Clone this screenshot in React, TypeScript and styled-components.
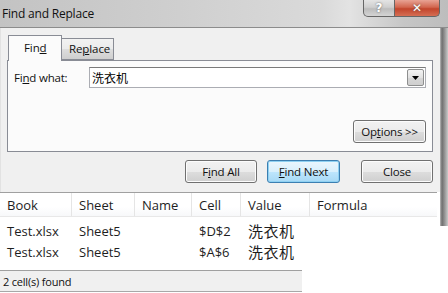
import React from "react";
import styled, { createGlobalStyle } from "styled-components";

const Global = createGlobalStyle`
  html, body { margin: 0; padding: 0; background: #ffffff; }
  body { font-family: "Open Sans", "Noto Sans", "Noto Sans CJK SC", sans-serif; }
`;

const UI = `"Open Sans", "Noto Sans", "Noto Sans CJK SC", sans-serif`;
const CJK = `"Noto Sans CJK SC", sans-serif`;

const Window = styled.div`
  position: relative;
  width: 448px;
  height: 293px;
  overflow: hidden;
  background: #ffffff;
  display: flex;
  flex-direction: column;
  &::after {
    content: "";
    position: absolute;
    top: 28px;
    right: 0;
    width: 8px;
    height: 198px;
    background: linear-gradient(90deg, #b8b8b8 0px, #6f6f6f 2px, #8a8a8a 4px, #c9c9c9 8px);
  }
`;

const TitleBar = styled.div`
  height: 28px;
  flex: none;
  display: flex;
  align-items: flex-start;
  justify-content: space-between;
  background: linear-gradient(90deg, #c3c3c3 0%, #cfcfcf 40%, #dadada 72%, #e3e3e3 78%, #c6c6c6 90%, #bdbdbd 100%);
  border-bottom: 1px solid #8c8c8c;
  box-sizing: border-box;
`;

const Title = styled.span`
  font-family: ${UI};
  font-size: 12px;
  letter-spacing: -0.2px;
  color: #111;
  padding: 5px 0 0 2px;
`;

const Caption = styled.div`
  display: flex;
  margin-right: 8px;
`;

const CapButton = styled.div<{ $close?: boolean }>`
  width: ${(p) => (p.$close ? 45 : 32)}px;
  height: 17px;
  box-sizing: border-box;
  display: flex;
  align-items: center;
  justify-content: center;
  font-family: "DejaVu Sans", sans-serif;
  font-weight: bold;
  font-size: 12px;
  color: #fff;
  text-shadow: 0 0 2px #555;
  border: 1px solid #666;
  border-top: none;
  border-radius: ${(p) => (p.$close ? "0 0 5px 0" : "0 0 0 5px")};
  ${(p) => (p.$close ? "border-left: none;" : "")}
  background: ${(p) =>
    p.$close
      ? "linear-gradient(180deg, #e8a394 0%, #d2664f 45%, #c2452c 55%, #d56e54 100%)"
      : "linear-gradient(180deg, #e4e4e4 0%, #cfcfcf 45%, #bcbcbc 55%, #d4d4d4 100%)"};
`;

const Client = styled.div`
  background: #f0f0f0;
  padding: 7px 15px 0 6px;
  height: 164px;
  box-sizing: border-box;
  flex: none;
  border-left: 1px solid #e2e2e2;
`;

const TabStrip = styled.div`
  display: flex;
  align-items: flex-end;
  height: 25px;
  padding-left: 1px;
`;

const Tab = styled.div<{ $active?: boolean }>`
  font-family: ${UI};
  font-size: 11.5px;
  letter-spacing: -0.1px;
  color: #111;
  box-sizing: border-box;
  border: 1px solid #898c95;
  border-bottom: ${(p) => (p.$active ? "none" : "1px solid #898c95")};
  ${(p) => (p.$active ? "" : "border-left: none;")}
  height: ${(p) => (p.$active ? 26 : 22)}px;
  width: ${(p) => (p.$active ? 54 : 52)}px;
  margin-bottom: ${(p) => (p.$active ? -1 : 0)}px;
  padding: ${(p) => (p.$active ? "4px 0 0 15px" : "2px 0 0 7px")};
  background: ${(p) =>
    p.$active ? "#fbfbfb" : "linear-gradient(180deg, #f2f2f2 0%, #ebebeb 50%, #dddddd 51%, #cfcfcf 100%)"};
  position: relative;
  z-index: ${(p) => (p.$active ? 1 : 0)};
  u { text-decoration: underline; }
`;

const Panel = styled.div`
  width: 426px;
  height: 92px;
  box-sizing: border-box;
  border: 1px solid #898c95;
  background: #fbfbfb;
  padding: 6px 6px 0 6px;
  display: flex;
  flex-direction: column;
`;

const FieldRow = styled.div`
  display: flex;
  align-items: center;
  height: 21px;
`;

const Label = styled.span`
  font-family: ${UI};
  font-size: 11.5px;
  letter-spacing: -0.2px;
  color: #111;
  width: 75px;
`;

const Combo = styled.div`
  flex: 1;
  height: 21px;
  box-sizing: border-box;
  border: 1px solid #abadb3;
  border-top-color: #7a7a7a;
  background: #fff;
  display: flex;
  align-items: center;
  justify-content: space-between;
  padding: 0 1px 0 2px;
`;

const ComboText = styled.span`
  font-family: ${CJK};
  font-size: 12px;
  color: #000;
`;

const DropButton = styled.div`
  width: 17px;
  height: 17px;
  box-sizing: border-box;
  border: 1px solid #8e8f8f;
  border-radius: 2px;
  background: linear-gradient(180deg, #f3f3f3 0%, #e2e2e2 50%, #d6d6d6 51%, #cfcfcf 100%);
  display: flex;
  align-items: center;
  justify-content: center;
`;

const PanelFooter = styled.div`
  display: flex;
  justify-content: flex-end;
  margin-top: 32px;
`;

const Button = styled.div<{ $def?: boolean; $w?: number }>`
  width: ${(p) => p.$w ?? 73}px;
  height: 23px;
  box-sizing: border-box;
  border: 1px solid ${(p) => (p.$def ? "#3c7fb1" : "#707070")};
  border-radius: 3px;
  background: ${(p) =>
    p.$def
      ? "linear-gradient(180deg, #eaf6fd 0%, #d9f0fc 50%, #bee6fd 51%, #a7d9f5 100%)"
      : "linear-gradient(180deg, #f2f2f2 0%, #ebebeb 50%, #dddddd 51%, #cfcfcf 100%)"};
  box-shadow: inset 0 0 0 1px ${(p) => (p.$def ? "#8fd1f2" : "#fcfcfc")};
  display: flex;
  align-items: center;
  justify-content: center;
  font-family: ${UI};
  font-size: 11.5px;
  letter-spacing: -0.2px;
  color: #111;
  u { text-decoration: underline; }
`;

const ButtonRow = styled.div`
  display: flex;
  gap: 10px;
  justify-content: flex-end;
  margin-top: 8px;
  & > :last-child { margin-left: 11px; }
`;

const Table = styled.div`
  display: grid;
  grid-template-columns: 72px 63px 57px 49px 69px 127px;
  grid-template-rows: 27px 21px 21px;
  width: 437px;
  border-top: 1px solid #a0a0a0;
  background: #fff;
  padding-bottom: 8px;
`;

const HeadCell = styled.div<{ $last?: boolean }>`
  height: 24px;
  align-self: start;
  box-sizing: border-box;
  border-right: ${(p) => (p.$last ? "none" : "1px solid #e5e5e5")};
  border-bottom: 1px solid #e8e8e8;
  background: linear-gradient(180deg, #ffffff 0%, #ffffff 60%, #f7f8fa 100%);
  font-family: ${UI};
  font-size: 13px;
  color: #1e1e1e;
  padding-left: 7px;
  display: flex;
  align-items: center;
`;

const Cell = styled.div<{ $cjk?: boolean }>`
  font-family: ${(p) => (p.$cjk ? CJK : UI)};
  font-size: ${(p) => (p.$cjk ? 15 : 13)}px;
  letter-spacing: ${(p) => (p.$cjk ? "0.5px" : "0")};
  color: #1e1e1e;
  padding-left: 7px;
  display: flex;
  align-items: center;
  white-space: nowrap;
`;

const StatusBar = styled.div`
  width: 302px;
  height: 22px;
  box-sizing: border-box;
  border-top: 1px solid #a0a0a0;
  border-bottom: 1px solid #a8a8a8;
  background: #f0f0f0;
  font-family: ${UI};
  font-size: 11px;
  letter-spacing: -0.2px;
  color: #111;
  padding-left: 3px;
  display: flex;
  align-items: center;
`;

const rows = [
  ["Test.xlsx", "Sheet5", "", "$D$2", "洗衣机", ""],
  ["Test.xlsx", "Sheet5", "", "$A$6", "洗衣机", ""],
];

const heads = ["Book", "Sheet", "Name", "Cell", "Value", "Formula"];

export default function App() {
  return (
    <>
      <Global />
      <Window>
        <TitleBar>
          <Title>Find and Replace</Title>
          <Caption>
            <CapButton>?</CapButton>
            <CapButton $close>✕</CapButton>
          </Caption>
        </TitleBar>
        <Client>
          <TabStrip>
            <Tab $active>
              Fin<u>d</u>
            </Tab>
            <Tab>
              Re<u>p</u>lace
            </Tab>
          </TabStrip>
          <Panel>
            <FieldRow>
              <Label>
                Fi<u>n</u>d what:
              </Label>
              <Combo>
                <ComboText>洗衣机</ComboText>
                <DropButton>
                  <svg width="7" height="4" viewBox="0 0 7 4">
                    <path d="M0 0 H7 L3.5 4 Z" fill="#000" />
                  </svg>
                </DropButton>
              </Combo>
            </FieldRow>
            <PanelFooter>
              <Button $w={73}>
                Op<u>t</u>ions &gt;&gt;
              </Button>
            </PanelFooter>
          </Panel>
          <ButtonRow>
            <Button $w={72}>
              F<u>i</u>nd All
            </Button>
            <Button $def $w={73}>
              <u>F</u>ind Next
            </Button>
            <Button $w={72}>Close</Button>
          </ButtonRow>
        </Client>
        <Table>
          {heads.map((h, i) => (
            <HeadCell key={h} $last={i === heads.length - 1}>
              {h}
            </HeadCell>
          ))}
          {rows.map((r, ri) =>
            r.map((c, ci) => (
              <Cell key={`${ri}-${ci}`} $cjk={ci === 4}>
                {c}
              </Cell>
            ))
          )}
        </Table>
        <StatusBar>2 cell(s) found</StatusBar>
      </Window>
    </>
  );
}
